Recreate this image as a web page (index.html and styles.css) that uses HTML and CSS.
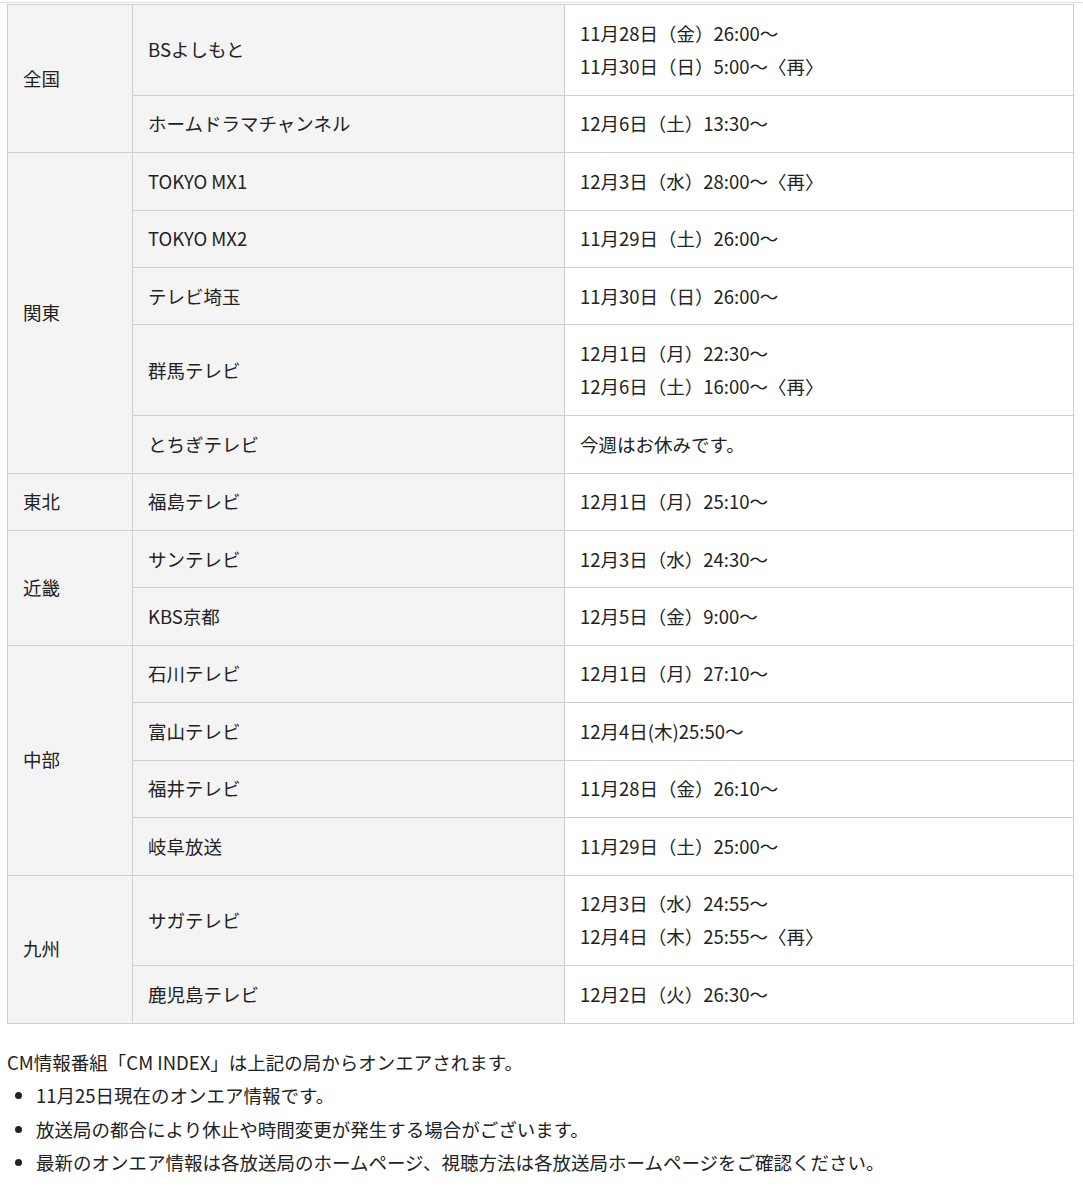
FILE: index.html
```html
<!DOCTYPE html>
<html lang="ja">
<head>
<meta charset="utf-8">
<link rel="stylesheet" href="styles.css">
</head>
<body>
<div class="topline"></div>
<div class="content">
<table class="onair">
<tbody>
<tr><th rowspan="2" class="area">全国</th><td class="station">BSよしもと</td><td class="time">11月28日（金）26:00〜<br>11月30日（日）5:00〜〈再〉</td></tr>
<tr><td class="station">ホームドラマチャンネル</td><td class="time">12月6日（土）13:30〜</td></tr>
<tr><th rowspan="5" class="area">関東</th><td class="station">TOKYO MX1</td><td class="time">12月3日（水）28:00〜〈再〉</td></tr>
<tr><td class="station">TOKYO MX2</td><td class="time">11月29日（土）26:00〜</td></tr>
<tr><td class="station">テレビ埼玉</td><td class="time">11月30日（日）26:00〜</td></tr>
<tr><td class="station">群馬テレビ</td><td class="time">12月1日（月）22:30〜<br>12月6日（土）16:00〜〈再〉</td></tr>
<tr><td class="station">とちぎテレビ</td><td class="time">今週はお休みです。</td></tr>
<tr><th class="area">東北</th><td class="station">福島テレビ</td><td class="time">12月1日（月）25:10〜</td></tr>
<tr><th rowspan="2" class="area">近畿</th><td class="station">サンテレビ</td><td class="time">12月3日（水）24:30〜</td></tr>
<tr><td class="station">KBS京都</td><td class="time">12月5日（金）9:00〜</td></tr>
<tr><th rowspan="4" class="area">中部</th><td class="station">石川テレビ</td><td class="time">12月1日（月）27:10〜</td></tr>
<tr><td class="station">富山テレビ</td><td class="time">12月4日(木)25:50〜</td></tr>
<tr><td class="station">福井テレビ</td><td class="time">11月28日（金）26:10〜</td></tr>
<tr><td class="station">岐阜放送</td><td class="time">11月29日（土）25:00〜</td></tr>
<tr><th rowspan="2" class="area">九州</th><td class="station">サガテレビ</td><td class="time">12月3日（水）24:55〜<br>12月4日（木）25:55〜〈再〉</td></tr>
<tr><td class="station">鹿児島テレビ</td><td class="time">12月2日（火）26:30〜</td></tr>
</tbody>
</table>
<p class="lead">CM情報番組「CM INDEX」は上記の局からオンエアされます。</p>
<ul class="notes">
<li>11月25日現在のオンエア情報です。</li>
<li>放送局の都合により休止や時間変更が発生する場合がございます。</li>
<li>最新のオンエア情報は各放送局のホームページ、視聴方法は各放送局ホームページをご確認ください。</li>
</ul>
</div>
</body>
</html>
```

FILE: styles.css
```css
html, body {
  margin: 0;
  padding: 0;
  background: #fff;
}
body {
  font-family: "Noto Sans CJK JP", "Noto Sans", sans-serif;
  font-size: 18.5px;
  line-height: 33.4px;
  color: #222;
}
.topline {
  height: 2px;
  border-bottom: 1px solid #e2e2e2;
}
.content {
  width: 1067px;
  padding-left: 7px;
  padding-top: 1px;
}
.onair {
  width: 100%;
  border-collapse: collapse;
  border: 1px solid #cfcfcf;
}
.onair th,
.onair td {
  border: 1px solid #cfcfcf;
  padding: 11.5px 15px;
  text-align: left;
  vertical-align: middle;
  font-weight: normal;
}
.area {
  width: 94px;
  background: #f4f4f4;
}
.station {
  width: 401px;
  background: #f4f4f4;
}
.time {
  background: #fff;
}
.lead {
  margin: 22px 0 0;
}
.notes {
  margin: 0;
  padding-left: 29px;
}
```
